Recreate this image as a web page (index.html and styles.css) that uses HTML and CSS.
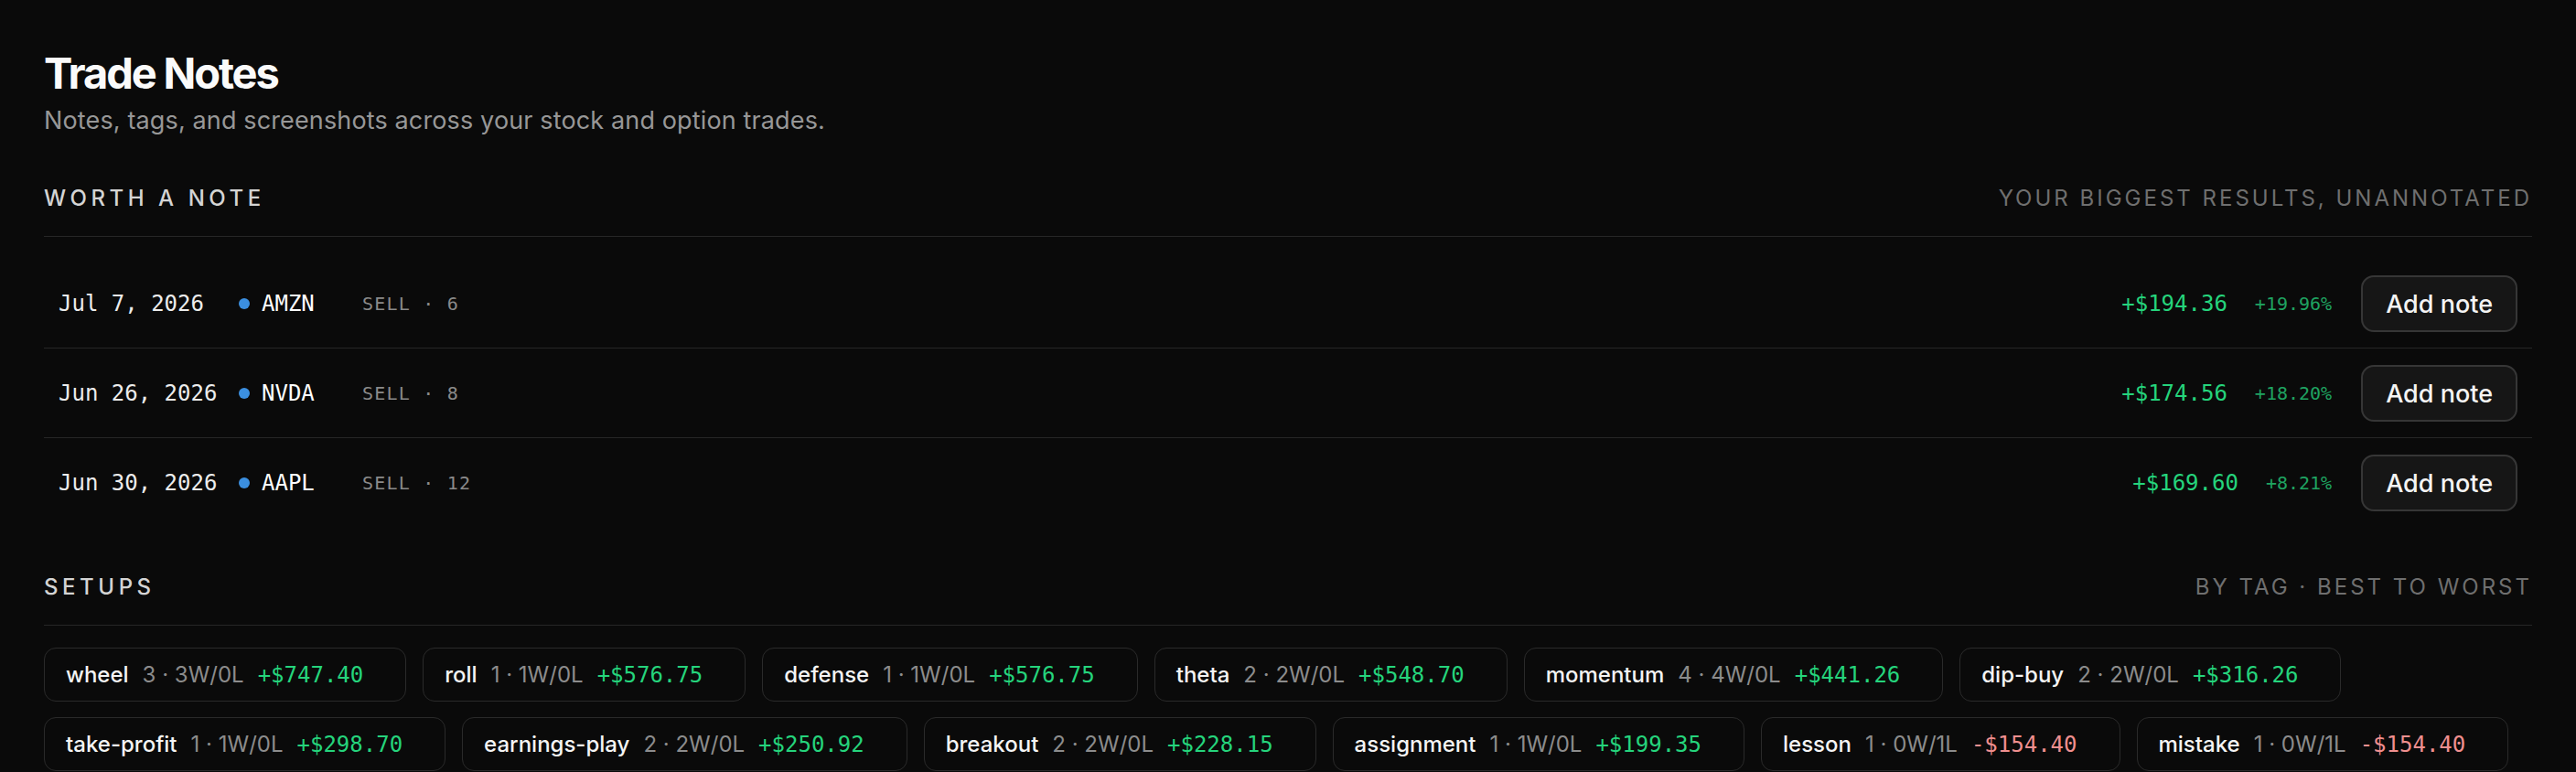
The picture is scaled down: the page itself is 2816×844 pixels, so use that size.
FILE: index.html
```html
<!DOCTYPE html>
<html lang="en">
<head>
    <meta charset="UTF-8">
    <meta name="viewport" content="width=device-width, initial-scale=1.0">
    <title>Trade Notes</title>
    <link rel="stylesheet" href="styles.css">
</head>
<body>
    <div class="page">
        <h1 class="title">Trade Notes</h1>
        <p class="subtitle">Notes, tags, and screenshots across your stock and option trades.</p>

        <div class="section">
            <div class="section-head">
                <span class="section-label">Worth a note</span>
                <span class="section-hint">Your biggest results, unannotated</span>
            </div>

            <div class="trade-list">
                <div class="trade-row">
                    <span class="date">Jul 7, 2026</span>
                    <span class="dot"></span>
                    <span class="ticker">AMZN</span>
                    <span class="side">SELL · 6</span>
                    <span class="amount">+$194.36</span>
                    <span class="pct">+19.96%</span>
                    <button class="note-btn">Add note</button>
                </div>
                <div class="trade-row">
                    <span class="date">Jun 26, 2026</span>
                    <span class="dot"></span>
                    <span class="ticker">NVDA</span>
                    <span class="side">SELL · 8</span>
                    <span class="amount">+$174.56</span>
                    <span class="pct">+18.20%</span>
                    <button class="note-btn">Add note</button>
                </div>
                <div class="trade-row">
                    <span class="date">Jun 30, 2026</span>
                    <span class="dot"></span>
                    <span class="ticker">AAPL</span>
                    <span class="side">SELL · 12</span>
                    <span class="amount">+$169.60</span>
                    <span class="pct">+8.21%</span>
                    <button class="note-btn">Add note</button>
                </div>
            </div>
        </div>

        <div class="section setups">
            <div class="section-head">
                <span class="section-label">Setups</span>
                <span class="section-hint">By tag · best to worst</span>
            </div>

            <div class="tag-list">
                <div class="tag"><span class="tag-name">wheel</span><span class="tag-stats">3 · 3W/0L</span><span class="tag-pnl">+$747.40</span></div>
                <div class="tag"><span class="tag-name">roll</span><span class="tag-stats">1 · 1W/0L</span><span class="tag-pnl">+$576.75</span></div>
                <div class="tag"><span class="tag-name">defense</span><span class="tag-stats">1 · 1W/0L</span><span class="tag-pnl">+$576.75</span></div>
                <div class="tag"><span class="tag-name">theta</span><span class="tag-stats">2 · 2W/0L</span><span class="tag-pnl">+$548.70</span></div>
                <div class="tag"><span class="tag-name">momentum</span><span class="tag-stats">4 · 4W/0L</span><span class="tag-pnl">+$441.26</span></div>
                <div class="tag"><span class="tag-name">dip-buy</span><span class="tag-stats">2 · 2W/0L</span><span class="tag-pnl">+$316.26</span></div>
                <div class="tag"><span class="tag-name">take-profit</span><span class="tag-stats">1 · 1W/0L</span><span class="tag-pnl">+$298.70</span></div>
                <div class="tag"><span class="tag-name">earnings-play</span><span class="tag-stats">2 · 2W/0L</span><span class="tag-pnl">+$250.92</span></div>
                <div class="tag"><span class="tag-name">breakout</span><span class="tag-stats">2 · 2W/0L</span><span class="tag-pnl">+$228.15</span></div>
                <div class="tag"><span class="tag-name">assignment</span><span class="tag-stats">1 · 1W/0L</span><span class="tag-pnl">+$199.35</span></div>
                <div class="tag"><span class="tag-name">lesson</span><span class="tag-stats">1 · 0W/1L</span><span class="tag-pnl loss">-$154.40</span></div>
                <div class="tag"><span class="tag-name">mistake</span><span class="tag-stats">1 · 0W/1L</span><span class="tag-pnl loss">-$154.40</span></div>
            </div>
        </div>
    </div>
</body>
</html>
```

FILE: styles.css
```css
* { margin: 0; padding: 0; box-sizing: border-box; }
body { font-family: Inter, "Noto Sans", sans-serif; background: #0a0a0a; color: #f2f2f2; }
.page { padding: 52px 48px 48px; }

.title { font-size: 47px; line-height: 56px; font-weight: 700; letter-spacing: -0.045em; color: #fafafa; }
.subtitle { margin-top: 6px; font-size: 27px; line-height: 35px; letter-spacing: 0.005em; color: #979797; }

/* section header with the small caps labels */
.section { margin-top: 53px; }
.section.setups { margin-top: 51px; }
.section-head { display: flex; justify-content: space-between; align-items: center; padding-bottom: 26px; border-bottom: 1px solid #262626; }
.section-label, .section-hint { font-size: 24px; line-height: 30px; text-transform: uppercase; }
.section-label { font-weight: 500; letter-spacing: 0.19em; color: #d4d4d4; }
.section-hint { font-weight: 400; letter-spacing: 0.125em; color: #6f6f6f; }

/* trades that still need a note */
.trade-list { margin-top: 24px; }
.trade-row { display: flex; align-items: center; padding: 18px 16px 17px; border-bottom: 1px solid #262626; font-family: "DejaVu Sans Mono", "Liberation Mono", monospace; }
.trade-row:last-child { border-bottom: none; }
.date { width: 185px; margin-right: 12px; font-size: 24px; color: #ececec; }
.dot { width: 12px; height: 12px; border-radius: 50%; background: #3b8fe0; margin-right: 13px; }
.ticker { width: 110px; font-size: 24px; color: #fff; }
.side { font-size: 20px; letter-spacing: 0.06em; color: #8a8a8a; }
.amount { margin-left: auto; font-size: 24px; color: #25d47c; }
.pct { margin-left: 30px; font-size: 20px; color: #1fa361; }
.note-btn { margin-left: 32px; height: 62px; padding: 0 25px; background: #161616; color: #f4f4f4; border: 2px solid #363636; border-radius: 14px; font-family: Inter, sans-serif; font-size: 27px; font-weight: 500; cursor: pointer; }

/* tag chips */
.tag-list { display: flex; flex-wrap: wrap; gap: 17px 18px; margin-top: 24px; }
.tag { display: flex; align-items: center; gap: 15px; padding: 14px 46px 13px 23px; border: 1px solid #2a2a2a; border-radius: 13px; font-size: 24px; line-height: 30px; }
.tag-name { font-weight: 500; color: #f4f4f4; }
.tag-stats { color: #8c8c8c; }
.tag-pnl { font-family: "DejaVu Sans Mono", "Liberation Mono", monospace; color: #25d47c; }
.tag-pnl.loss { color: #f08f8f; }
```
